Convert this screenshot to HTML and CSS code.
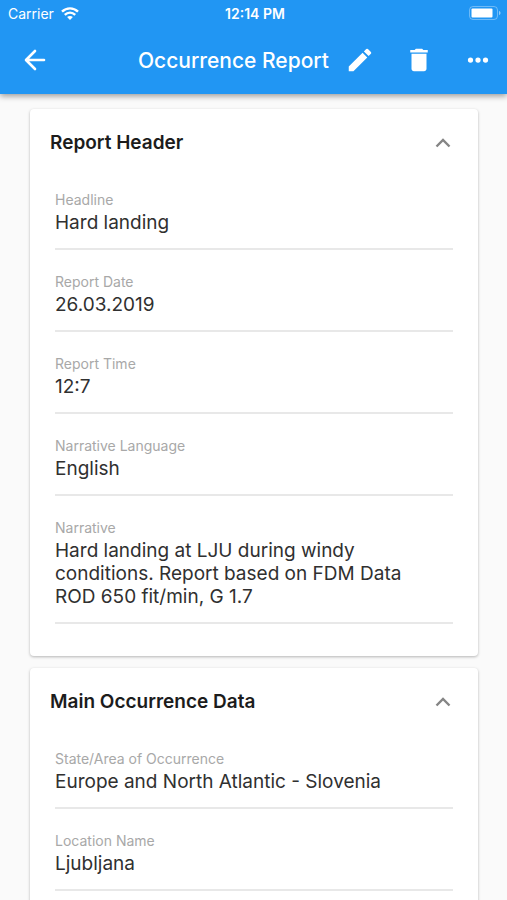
FILE: index.html
```html
<!DOCTYPE html>
<html lang="en">
<head>
<meta charset="utf-8">
<meta name="viewport" content="width=device-width, initial-scale=1">
<title>Occurrence Report</title>
<link rel="stylesheet" href="styles.css">
</head>
<body>
<header class="app-bar">
  <div class="status">
    <div class="carrier">
      <span>Carrier</span>
      <svg width="18" height="13" viewBox="0 0 18 13" fill="none" stroke="currentColor" stroke-width="2.400">
        <path d="M1 4.700C5.600.2 12.400.2 17 4.700M3.800 7.800c3-2.900 7.400-2.900 10.400 0"/>
        <path d="M6.100 10c1.700-1.500 4.100-1.500 5.800 0L9 12.900z" fill="currentColor" stroke="none"/>
      </svg>
    </div>
    <span class="clock">12:14 PM</span>
    <svg class="battery" width="33" height="15" viewBox="0 0 33 15">
      <rect x=".5" y=".5" width="28" height="13" rx="3.500" fill="none" stroke="currentColor" stroke-opacity=".35"/>
      <rect x="2.500" y="2.500" width="21" height="9" rx="1" fill="currentColor"/>
      <path d="M30 5c2 .5 2 3.500 0 4z" fill="currentColor" fill-opacity=".5"/>
    </svg>
  </div>
  <div class="toolbar">
    <button class="tool" type="button" aria-label="Back">
      <svg width="30" height="30" viewBox="0 0 24 24" fill="none" stroke="currentColor" stroke-width="2.100" stroke-linecap="round" stroke-linejoin="round"><path d="M19.200 12H5M12 4.800 4.800 12l7.200 7.200"/></svg>
    </button>
    <h1 class="title">Occurrence Report</h1>
    <div class="actions">
      <button class="tool" type="button" aria-label="Edit">
        <svg width="30" height="30" viewBox="0 0 24 24" fill="currentColor"><path d="M3 17.250V21h3.750L17.810 9.940l-3.750-3.750L3 17.250zM20.710 7.040a1 1 0 0 0 0-1.410l-2.340-2.340a1 1 0 0 0-1.410 0l-1.830 1.830 3.750 3.750 1.830-1.830z"/></svg>
      </button>
      <button class="tool" type="button" aria-label="Delete">
        <svg width="30" height="30" viewBox="0 0 24 24" fill="currentColor"><path d="M6 19c0 1.100.9 2 2 2h8c1.100 0 2-.9 2-2V7H6v12zM19 4h-3.500l-1-1h-5l-1 1H5v2h14V4z"/></svg>
      </button>
      <button class="tool" type="button" aria-label="More">
        <svg width="30" height="30" viewBox="0 0 24 24" fill="currentColor"><circle cx="6" cy="12" r="2.100"/><circle cx="12" cy="12" r="2.100"/><circle cx="18" cy="12" r="2.100"/></svg>
      </button>
    </div>
  </div>
</header>
<main class="content">
  <section class="card">
    <header class="card-head">
      <h2>Report Header</h2>
      <button class="toggle" type="button" aria-label="Collapse Report Header" aria-expanded="true">
        <svg width="16" height="10" viewBox="0 0 16 10" fill="none" stroke="currentColor" stroke-width="2.400"><path d="M1.500 8.500 8 2l6.500 6.500"/></svg>
      </button>
    </header>
    <dl class="fields">
      <div class="field"><dt>Headline</dt><dd>Hard landing</dd></div>
      <div class="field"><dt>Report Date</dt><dd>26.03.2019</dd></div>
      <div class="field"><dt>Report Time</dt><dd>12:7</dd></div>
      <div class="field"><dt>Narrative Language</dt><dd>English</dd></div>
      <div class="field"><dt>Narrative</dt><dd>Hard landing at LJU during windy conditions. Report based on FDM Data ROD 650 fit/min, G 1.7</dd></div>
    </dl>
  </section>
  <section class="card">
    <header class="card-head">
      <h2>Main Occurrence Data</h2>
      <button class="toggle" type="button" aria-label="Collapse Main Occurrence Data" aria-expanded="true">
        <svg width="16" height="10" viewBox="0 0 16 10" fill="none" stroke="currentColor" stroke-width="2.400"><path d="M1.500 8.500 8 2l6.500 6.500"/></svg>
      </button>
    </header>
    <dl class="fields">
      <div class="field"><dt>State/Area of Occurrence</dt><dd>Europe and North Atlantic - Slovenia</dd></div>
      <div class="field"><dt>Location Name</dt><dd>Ljubljana</dd></div>
    </dl>
  </section>
</main>
</body>
</html>
```
FILE: styles.css
```css
* {
  box-sizing: border-box;
}

body {
  display: flex;
  flex-direction: column;
  height: 100vh;
  margin: 0;
  overflow: hidden;
  background: #fafafa;
  color: #303030;
  font-family: Inter, Roboto, "Liberation Sans", sans-serif;
}

h1, h2, dl, dd {
  margin: 0;
}

svg {
  display: block;
}

button {
  display: flex;
  align-items: center;
  justify-content: center;
  padding: 0;
  border: 0;
  background: none;
  color: inherit;
  cursor: pointer;
}

.app-bar {
  flex: none;
  z-index: 1;
  background: #2196f3;
  color: #fff;
  box-shadow: 0 2px 6px rgba(0, 0, 0, 0.4);
}

.status {
  display: grid;
  grid-template-columns: 1fr auto 1fr;
  align-items: center;
  height: 26px;
  padding: 0 5px 0 8px;
  font-size: 14px;
}

.carrier {
  display: flex;
  align-items: center;
  gap: 7px;
}

.clock {
  font-weight: 600;
}

.battery {
  justify-self: end;
}

.toolbar {
  display: flex;
  align-items: center;
  justify-content: space-between;
  height: 68px;
  padding: 0 14px 0 20px;
}

.title {
  flex: 1;
  text-align: right;
  font-size: 21px;
  font-weight: 500;
  white-space: nowrap;
}

.actions {
  display: flex;
  gap: 29px;
  margin-left: 16px;
}

.content {
  flex: 1;
  min-height: 0;
  display: flex;
  flex-direction: column;
  gap: 12px;
  padding: 15px 29px 15px 30px;
  overflow-y: auto;
  scrollbar-width: none;
}

.card {
  flex: none;
  padding-bottom: 32px;
  border-radius: 4px;
  background: #fff;
  box-shadow: 0 1px 3px rgba(0, 0, 0, 0.28);
}

.card-head {
  display: flex;
  align-items: center;
  justify-content: space-between;
  height: 67px;
  padding: 0 27px 0 20px;
}

.card-head h2 {
  color: #1c1c1c;
  font-size: 19px;
  font-weight: 600;
}

.toggle {
  color: #858585;
}

.fields {
  display: flex;
  flex-direction: column;
  gap: 24px;
  padding: 16px 25px 0;
}

.field {
  padding-bottom: 14px;
  border-bottom: 2px solid #e8e8e8;
}

.field dt {
  margin-bottom: 3px;
  color: #a8a8a8;
  font-size: 14px;
  line-height: 16px;
}

.field dd {
  padding-right: 16px;
  font-size: 19px;
  line-height: 23px;
}
```
